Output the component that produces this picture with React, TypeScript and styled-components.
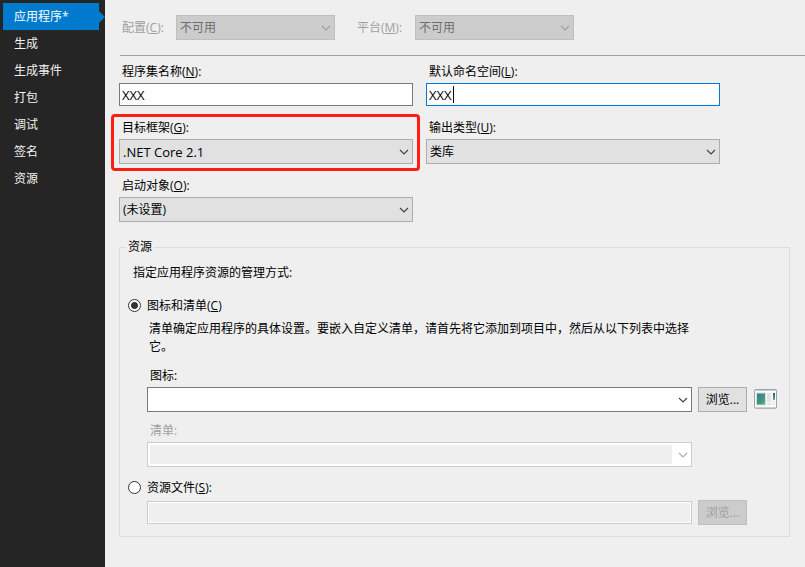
import React, { useId, useState } from "react";
import styled, { createGlobalStyle, css } from "styled-components";

const GlobalStyle = createGlobalStyle`
  * { box-sizing: border-box; }
  body {
    margin: 0;
    background: #efefef;
    color: #000;
    font: 12px/16px "Open Sans", "Noto Sans CJK SC", sans-serif;
  }
  button, input, select { font: inherit; color: inherit; }
`;

const Page = styled.div`
  display: flex;
  min-height: 100vh;
`;

const Sidebar = styled.nav`
  flex: 0 0 105px;
  padding: 3px 6px 3px 3px;
  background: #252526;
`;

const TabLink = styled.a<{ $active?: boolean }>`
  position: relative;
  display: block;
  padding: 6px 0 5px 11px;
  color: #f1f1f1;
  text-decoration: none;
  ${(p) =>
    p.$active &&
    css`
      background: #007acc;
      color: #fff;
      &::after {
        content: "";
        position: absolute;
        left: 100%;
        top: 8px;
        border: 6px solid transparent;
        border-left-color: #007acc;
        border-right-width: 0;
      }
    `}
`;

const Main = styled.main`
  flex: 1;
  min-width: 0;
  padding: 15px 0 30px 14px;
`;

const ConfigBar = styled.div`
  display: flex;
  gap: 22px;
  margin-left: 1px;
  padding: 0 0 15px 2px;
  border-bottom: 1px solid #a0a0a0;
`;

const InlineField = styled.div`
  display: flex;
  align-items: center;
  color: #a0a0a0;
`;

const InlineLabel = styled.label<{ $width: number }>`
  width: ${(p) => p.$width}px;
`;

const FormGrid = styled.div`
  display: grid;
  grid-template-columns: 1fr 1fr;
  gap: 13px;
  margin: 7px 85px 17px 0;
`;

const Field = styled.div`
  position: relative;
`;

const Label = styled.label<{ $disabled?: boolean }>`
  display: block;
  margin-bottom: 3px;
  padding: 1px 0 0 3px;
  color: ${(p) => (p.$disabled ? "#a0a0a0" : "inherit")};
`;

const Highlight = styled.div`
  position: absolute;
  inset: -5px -7px -7px -8px;
  border: 3px solid #ff1e12;
  border-radius: 4px;
  pointer-events: none;
`;

const TextBox = styled.input<{ $active?: boolean }>`
  display: block;
  width: 100%;
  height: 23px;
  padding: 0 2px;
  border: 1px solid ${(p) => (p.$active ? "#0078d7" : "#7a7a7a")};
  border-radius: 0;
  background: #fff;
  font-size: 13px;
  outline: none;
  caret-color: transparent;
  &:disabled {
    border-color: #cccccc;
    background: #efefef;
    box-shadow: inset 0 0 0 1px #fff;
  }
`;

const Caret = styled.span`
  position: absolute;
  left: 27px;
  bottom: 3px;
  width: 1px;
  height: 17px;
  background: #000;
`;

const SelectWrap = styled.div<{ $width?: number }>`
  position: relative;
  width: ${(p) => (p.$width ? `${p.$width}px` : "100%")};
`;

const SelectBox = styled.select<{ $latin?: boolean }>`
  appearance: none;
  display: block;
  width: 100%;
  height: 25px;
  padding: 0 20px 0 3px;
  border: 1px solid #adadad;
  border-radius: 0;
  background: #e1e1e1;
  font-size: ${(p) => (p.$latin ? 13 : 12)}px;
  outline: none;
  &:disabled {
    border-color: #bfbfbf;
    background: #cccccc;
    color: #6d6d6d;
    opacity: 1;
  }
`;

const ChevronSvg = styled.svg<{ $color: string }>`
  display: block;
  fill: none;
  stroke: ${(p) => p.$color};
  stroke-width: 1.2;
`;

const SelectArrow = styled.span`
  position: absolute;
  top: 10px;
  right: 4px;
  pointer-events: none;
`;

const Group = styled.fieldset`
  min-width: 0;
  margin: 0 15px 0 0;
  padding: 10px 12px 11px 8px;
  border: 1px solid #dcdcdc;
`;

const Legend = styled.legend`
  margin-left: -2px;
  padding: 0 2px;
`;

const Intro = styled.p`
  margin: 0 0 16px 5px;
`;

const RadioLabel = styled.label`
  display: flex;
  align-items: center;
  gap: 6px;
  height: 16px;
`;

const RadioText = styled.span`
  padding-top: 2px;
`;

const Radio = styled.input`
  appearance: none;
  width: 13px;
  height: 13px;
  margin: 0;
  border: 1px solid #333;
  border-radius: 50%;
  background: #fff;
  &:checked {
    background: radial-gradient(circle, #333 3px, #fff 4px);
  }
`;

const ResourceGrid = styled.div`
  display: grid;
  grid-template-columns: minmax(0, 1fr) 49px 24px;
  column-gap: 6px;
  align-items: center;
  padding-left: 19px;
`;

const Wide = styled.div`
  grid-column: 1 / -1;
`;

const Hint = styled.p`
  grid-column: 1;
  margin: 7px 0 11px;
  padding-left: 2px;
  line-height: 18px;
`;

const Combo = styled.div<{ $disabled?: boolean }>`
  display: flex;
  height: 25px;
  padding: 2px 0 2px 2px;
  border: 1px solid ${(p) => (p.$disabled ? "#cccccc" : "#7a7a7a")};
  background: #fff;
`;

const ComboInput = styled.input`
  flex: 1;
  min-width: 0;
  padding: 0 2px;
  border: 0;
  background: #fff;
  outline: none;
  &:disabled { background: #efefef; }
`;

const ComboButton = styled.button`
  display: grid;
  place-items: center;
  width: 19px;
  padding: 0 0 0 2px;
  border: 0;
  background: none;
`;

const PushButton = styled.button`
  height: 25px;
  padding: 0;
  border: 1px solid #adadad;
  background: #e1e1e1;
  &:disabled {
    border-color: #bfbfbf;
    background: #cccccc;
    color: #a0a0a0;
  }
`;

const Preview = styled.svg`
  display: block;
  width: 23px;
  height: 20px;
  margin-top: 2px;
  align-self: start;
  justify-self: end;
`;

const Spacer = styled(Wide)<{ $size: number }>`
  height: ${(p) => p.$size}px;
`;

function Key({ text, letter, colon = true }: { text: string; letter: string; colon?: boolean }) {
  return (
    <>
      {text}(<u>{letter}</u>){colon && ":"}
    </>
  );
}

function Chevron({ color = "#444" }: { color?: string }) {
  return (
    <ChevronSvg $color={color} width="10" height="6" viewBox="0 0 10 6" aria-hidden="true">
      <path d="M1 1 L5 5 L9 1" />
    </ChevronSvg>
  );
}

interface SelectProps {
  id: string;
  value: string;
  width?: number;
  disabled?: boolean;
  latin?: boolean;
}

function Select({ id, value, width, disabled, latin }: SelectProps) {
  return (
    <SelectWrap $width={width}>
      <SelectBox id={id} disabled={disabled} $latin={latin}>
        <option>{value}</option>
      </SelectBox>
      <SelectArrow>
        <Chevron color={disabled ? "#a0a0a0" : "#444"} />
      </SelectArrow>
    </SelectWrap>
  );
}

interface SelectFieldProps {
  text: string;
  letter: string;
  value: string;
  latin?: boolean;
  highlight?: boolean;
}

function SelectField({ text, letter, value, latin, highlight }: SelectFieldProps) {
  const id = useId();
  return (
    <Field>
      <Label htmlFor={id}>
        <Key text={text} letter={letter} />
      </Label>
      <Select id={id} value={value} latin={latin} />
      {highlight && <Highlight />}
    </Field>
  );
}

function TextField({ text, letter, active }: { text: string; letter: string; active?: boolean }) {
  const id = useId();
  return (
    <Field>
      <Label htmlFor={id}>
        <Key text={text} letter={letter} />
      </Label>
      <TextBox id={id} defaultValue="XXX" $active={active} />
      {active && <Caret />}
    </Field>
  );
}

function ComboBox({ id, disabled }: { id: string; disabled?: boolean }) {
  return (
    <Combo $disabled={disabled}>
      <ComboInput id={id} disabled={disabled} />
      <ComboButton type="button" disabled={disabled} aria-label="展开">
        <Chevron color={disabled ? "#b0b0b0" : "#444"} />
      </ComboButton>
    </Combo>
  );
}

function IconPreview() {
  return (
    <Preview viewBox="0 0 23 20" aria-hidden="true">
      <defs>
        <linearGradient id="pane" x1="0" y1="0" x2="1" y2="1">
          <stop offset="0" stopColor="#4675a8" />
          <stop offset="0.55" stopColor="#3c9480" />
          <stop offset="1" stopColor="#62b56c" />
        </linearGradient>
        <linearGradient id="bar" x1="0" y1="0" x2="0" y2="1">
          <stop offset="0" stopColor="#304f91" />
          <stop offset="1" stopColor="#62b578" />
        </linearGradient>
      </defs>
      <rect x="0.5" y="0.5" width="22" height="18.5" rx="1" fill="#fafafa" stroke="#9da3a9" />
      <path d="M1 1.5H22" stroke="#c5ccd3" />
      <path d="M1 19.5H22" stroke="#b4b6b9" />
      <rect x="2" y="3.5" width="10" height="13" fill="#d5dde0" />
      <rect x="3" y="4.5" width="8" height="11" fill="url(#pane)" />
      <path d="M13 4H17V13H13ZM13 14H17V16H13Z" fill="#e2e2e2" />
      <path d="M18 12H21V16H18Z" fill="#ededed" />
      <rect x="19" y="4" width="2" height="7" fill="url(#bar)" />
    </Preview>
  );
}

const tabs = ["应用程序*", "生成", "生成事件", "打包", "调试", "签名", "资源"];

export default function App() {
  const [mode, setMode] = useState("icon");
  return (
    <>
      <GlobalStyle />
      <Page>
        <Sidebar>
          {tabs.map((tab, i) => (
            <TabLink key={tab} href="#" $active={i === 0}>
              {tab}
            </TabLink>
          ))}
        </Sidebar>
        <Main>
          <ConfigBar>
            <InlineField>
              <InlineLabel htmlFor="config" $width={54}>
                <Key text="配置" letter="C" />
              </InlineLabel>
              <Select id="config" value="不可用" width={159} disabled />
            </InlineField>
            <InlineField>
              <InlineLabel htmlFor="platform" $width={58}>
                <Key text="平台" letter="M" />
              </InlineLabel>
              <Select id="platform" value="不可用" width={159} disabled />
            </InlineField>
          </ConfigBar>
          <FormGrid>
            <TextField text="程序集名称" letter="N" />
            <TextField text="默认命名空间" letter="L" active />
            <SelectField text="目标框架" letter="G" value=".NET Core 2.1" latin highlight />
            <SelectField text="输出类型" letter="U" value="类库" />
            <SelectField text="启动对象" letter="O" value="(未设置)" />
          </FormGrid>
          <Group>
            <Legend>资源</Legend>
            <Intro>指定应用程序资源的管理方式:</Intro>
            <RadioLabel>
              <Radio type="radio" name="mode" checked={mode === "icon"} onChange={() => setMode("icon")} />
              <RadioText>
                <Key text="图标和清单" letter="C" colon={false} />
              </RadioText>
            </RadioLabel>
            <ResourceGrid>
              <Hint>
                清单确定应用程序的具体设置。要嵌入自定义清单，请首先将它添加到项目中，然后从以下列表中选择它。
              </Hint>
              <Wide>
                <Label htmlFor="icon">图标:</Label>
              </Wide>
              <ComboBox id="icon" />
              <PushButton type="button">浏览...</PushButton>
              <IconPreview />
              <Spacer $size={10} />
              <Wide>
                <Label htmlFor="manifest" $disabled>
                  清单:
                </Label>
              </Wide>
              <ComboBox id="manifest" disabled />
              <Spacer $size={12} />
            </ResourceGrid>
            <RadioLabel>
              <Radio type="radio" name="mode" checked={mode === "file"} onChange={() => setMode("file")} />
              <RadioText>
                <Key text="资源文件" letter="S" />
              </RadioText>
            </RadioLabel>
            <Spacer $size={5} />
            <ResourceGrid>
              <TextBox aria-label="资源文件" disabled />
              <PushButton type="button" disabled>
                浏览...
              </PushButton>
            </ResourceGrid>
          </Group>
        </Main>
      </Page>
    </>
  );
}
